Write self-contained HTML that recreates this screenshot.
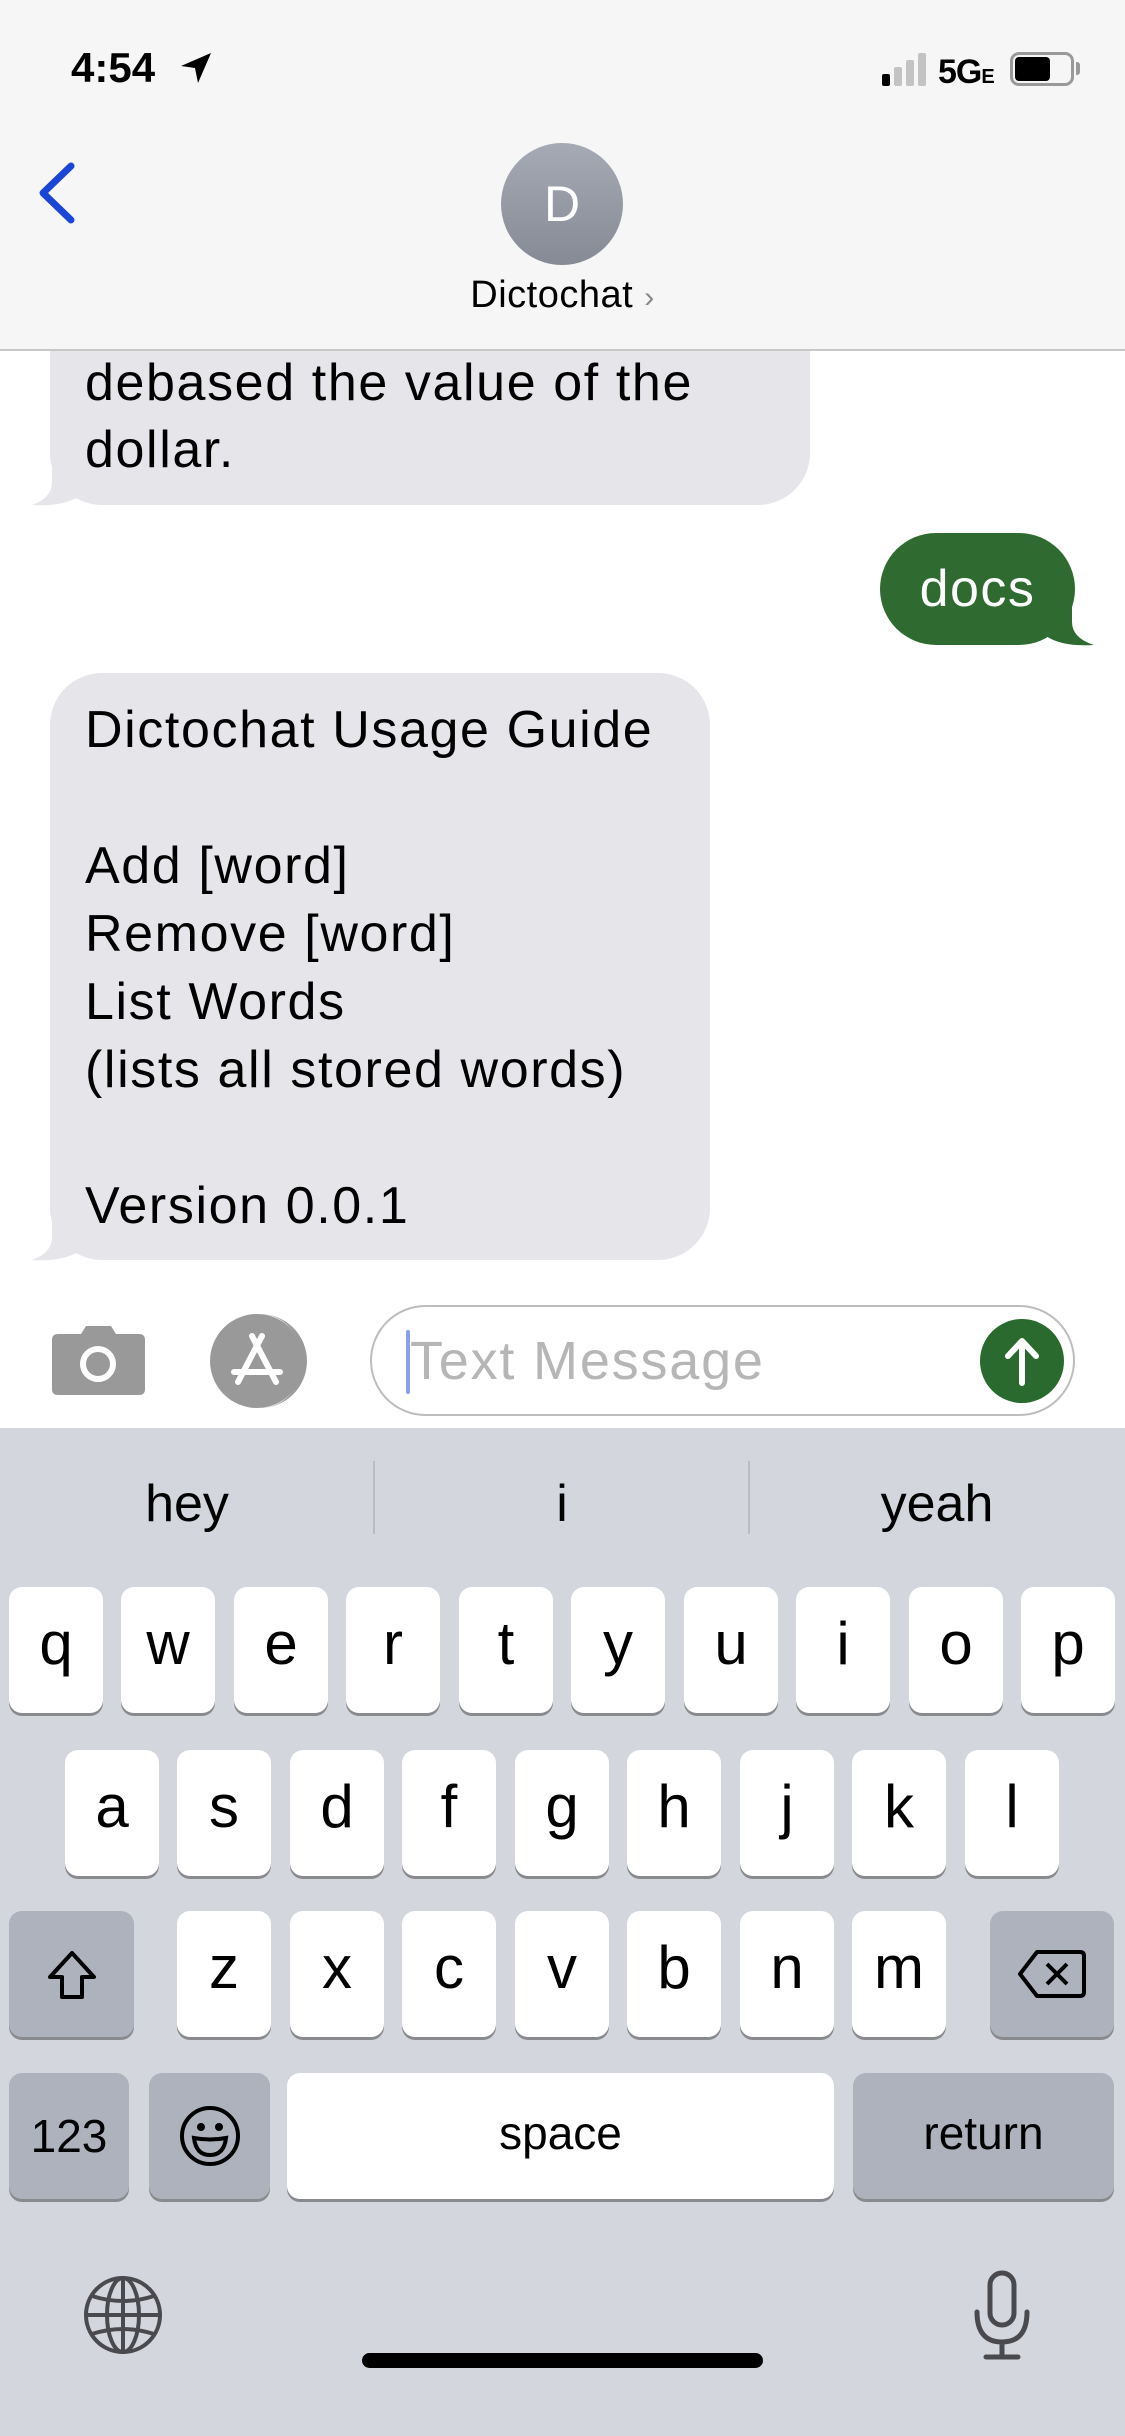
<!DOCTYPE html>
<html><head><meta charset="utf-8"><style>
*{margin:0;padding:0;box-sizing:border-box}
body{width:1125px;height:2436px;position:relative;background:#fff;font-family:"Liberation Sans",sans-serif;overflow:hidden}
.a{position:absolute}
.hdr{left:0;top:0;width:1125px;height:351px;background:#f6f6f6;border-bottom:2px solid #c8c8c8}
.bub{background:#e5e5ea;border-radius:52px;color:#000;font-size:52px;line-height:68px;letter-spacing:1.6px}
.kb{left:0;top:1428px;width:1125px;height:1008px;background:#d3d6dc}
.k{position:absolute;background:#fff;border-radius:13px;box-shadow:0 3px 0 #898a8d;font-size:60px;text-align:center;color:#000;height:126px;width:94px;line-height:114px}
.s{background:#adb2bc}
.sug{font-size:52px;top:1474px;text-align:center;width:374px;color:#000}
.div{width:2px;height:73px;top:1461px;background:#b9bcc2}
</style></head><body>
<div class="a bub" style="left:50px;top:300px;width:760px;height:205px;border-radius:0 0 52px 52px"></div>
<svg class="a" style="left:28px;top:460px" width="62" height="46" viewBox="0 0 62 46"><path d="M24 0 V22 Q24 38 4 45 Q34 47 52 36 V0 Z" fill="#e5e5ea"/></svg>
<div class="a" style="left:85px;top:350px;font-size:52px;line-height:67px;letter-spacing:1.6px">debased the value of the<br>dollar.</div>

<div class="a hdr"></div>
<div class="a" style="left:71px;top:44px;font-size:42px;font-weight:bold;">4:54</div>
<svg class="a" style="left:178px;top:50px" width="36" height="36" viewBox="0 0 36 36"><path d="M33 3 L3 16 L17 18 L20 33 Z" fill="#000"/></svg>
<div class="a" style="left:882px;top:74px;width:8px;height:12px;background:#000;border-radius:2px"></div>
<div class="a" style="left:894px;top:67px;width:8px;height:19px;background:#c3c3c3;border-radius:2px"></div>
<div class="a" style="left:906px;top:60px;width:8px;height:26px;background:#c3c3c3;border-radius:2px"></div>
<div class="a" style="left:918px;top:53px;width:8px;height:33px;background:#c3c3c3;border-radius:2px"></div>
<div class="a" style="left:938px;top:53px;font-size:34px;font-weight:bold;letter-spacing:-1px">5G<span style="font-size:20px">E</span></div>
<div class="a" style="left:1010px;top:52px;width:64px;height:34px;border:3px solid #999;border-radius:9px"></div>
<div class="a" style="left:1015px;top:57px;width:35px;height:24px;background:#000;border-radius:4px"></div>
<div class="a" style="left:1076px;top:62px;width:4px;height:13px;background:#999;border-radius:0 3px 3px 0"></div>
<svg class="a" style="left:34px;top:158px" width="50" height="70" viewBox="0 0 50 70"><path d="M37 8 L9 35 L37 62" fill="none" stroke="#1a45d6" stroke-width="7" stroke-linecap="round" stroke-linejoin="round"/></svg>
<div class="a" style="left:501px;top:143px;width:122px;height:122px;border-radius:50%;background:linear-gradient(#a6aab4,#868a95);color:#fff;font-size:50px;text-align:center;line-height:122px">D</div>
<div class="a" style="left:0;top:274px;width:1125px;text-align:center;font-size:38px;letter-spacing:0.5px">Dictochat <span style="color:#888;font-size:30px">›</span></div>

<svg class="a" style="left:1040px;top:600px" width="56" height="46" viewBox="0 0 56 46"><path d="M32 0 V22 Q32 38 54 45 Q22 47 6 36 V0 Z" fill="#2f6b31"/></svg>
<div class="a" style="left:880px;top:533px;width:195px;height:112px;background:#2f6b31;border-radius:56px;color:#fff;font-size:52px;letter-spacing:1.5px;text-align:center;line-height:112px">docs</div>

<svg class="a" style="left:28px;top:1215px" width="62" height="46" viewBox="0 0 62 46"><path d="M24 0 V22 Q24 38 4 45 Q34 47 52 36 V0 Z" fill="#e5e5ea"/></svg>
<div class="a bub" style="left:50px;top:673px;width:660px;height:587px;padding:23px 0 0 35px;">Dictochat Usage Guide<br><br>Add [word]<br>Remove [word]<br>List Words<br>(lists all stored words)<br><br>Version 0.0.1</div>

<svg class="a" style="left:51px;top:1326px" width="95" height="70" viewBox="0 0 95 70"><path d="M30 8 L35 0 H60 L65 8 H88 Q94 8 94 14 V63 Q94 69 88 69 H7 Q1 69 1 63 V14 Q1 8 7 8 Z" fill="#999"/><circle cx="47" cy="38" r="15" fill="none" stroke="#fff" stroke-width="6"/></svg>
<div class="a" style="left:213px;top:1314px;width:94px;height:94px;border-radius:50%;border-right:4px solid #999"></div>
<svg class="a" style="left:210px;top:1314px" width="94" height="94" viewBox="0 0 94 94"><circle cx="47" cy="47" r="47" fill="#999"/><path d="M52 22 L28 68 M42 22 L66 68 M24 58 H70" stroke="#fff" stroke-width="6" stroke-linecap="round"/></svg>
<div class="a" style="left:370px;top:1305px;width:705px;height:111px;border:2px solid #bdbdbd;border-radius:56px"></div>
<div class="a" style="left:406px;top:1330px;width:4px;height:64px;background:#8aa0ef;border-radius:2px"></div>
<div class="a" style="left:410px;top:1330px;font-size:54px;letter-spacing:1.8px;color:#b6b6b6">Text Message</div>
<div class="a" style="left:980px;top:1319px;width:84px;height:84px;border-radius:50%;background:#2a6a2e"></div>
<svg class="a" style="left:980px;top:1319px" width="84" height="84" viewBox="0 0 84 84"><path d="M42 64 V22 M28 37 L42 22 L56 37" fill="none" stroke="#fff" stroke-width="6" stroke-linecap="round" stroke-linejoin="round"/></svg>

<div class="a kb"></div>
<div class="a sug" style="left:0">hey</div>
<div class="a sug" style="left:375px">i</div>
<div class="a sug" style="left:750px">yeah</div>
<div class="a div" style="left:373px"></div>
<div class="a div" style="left:748px"></div>

<div class="k" style="left:9px;top:1587px">q</div>
<div class="k" style="left:121px;top:1587px">w</div>
<div class="k" style="left:234px;top:1587px">e</div>
<div class="k" style="left:346px;top:1587px">r</div>
<div class="k" style="left:459px;top:1587px">t</div>
<div class="k" style="left:571px;top:1587px">y</div>
<div class="k" style="left:684px;top:1587px">u</div>
<div class="k" style="left:796px;top:1587px">i</div>
<div class="k" style="left:909px;top:1587px">o</div>
<div class="k" style="left:1021px;top:1587px">p</div>

<div class="k" style="left:65px;top:1750px">a</div>
<div class="k" style="left:177px;top:1750px">s</div>
<div class="k" style="left:290px;top:1750px">d</div>
<div class="k" style="left:402px;top:1750px">f</div>
<div class="k" style="left:515px;top:1750px">g</div>
<div class="k" style="left:627px;top:1750px">h</div>
<div class="k" style="left:740px;top:1750px">j</div>
<div class="k" style="left:852px;top:1750px">k</div>
<div class="k" style="left:965px;top:1750px">l</div>

<div class="k s" style="left:9px;top:1911px;width:125px"><svg width="60" height="60" viewBox="0 0 60 60" style="margin-top:34px"><path d="M30 8 L52 32 H40 V52 H20 V32 H8 Z" fill="none" stroke="#000" stroke-width="4" stroke-linejoin="round"/></svg></div>
<div class="k" style="left:177px;top:1911px">z</div>
<div class="k" style="left:290px;top:1911px">x</div>
<div class="k" style="left:402px;top:1911px">c</div>
<div class="k" style="left:515px;top:1911px">v</div>
<div class="k" style="left:627px;top:1911px">b</div>
<div class="k" style="left:740px;top:1911px">n</div>
<div class="k" style="left:852px;top:1911px">m</div>
<div class="k s" style="left:990px;top:1911px;width:124px"><svg width="70" height="50" viewBox="0 0 70 50" style="margin-top:38px"><path d="M20 3 H63 Q67 3 67 7 V43 Q67 47 63 47 H20 L3 25 Z" fill="none" stroke="#000" stroke-width="4" stroke-linejoin="round"/><path d="M30 15 L50 35 M50 15 L30 35" stroke="#000" stroke-width="4"/></svg></div>

<div class="k s" style="left:9px;top:2073px;width:120px;font-size:46px;line-height:126px">123</div>
<div class="k s" style="left:149px;top:2073px;width:121px"><svg width="62" height="62" viewBox="0 0 62 62" style="margin-top:32px"><circle cx="31" cy="31" r="28" fill="none" stroke="#000" stroke-width="4"/><circle cx="22" cy="22" r="4"/><circle cx="40" cy="22" r="4"/><path d="M15 33 Q31 36 47 33 Q45 50 31 50 Q17 50 15 33 Z" fill="none" stroke="#000" stroke-width="4"/></svg></div>
<div class="k" style="left:287px;top:2073px;width:547px;font-size:46px;line-height:120px">space</div>
<div class="k s" style="left:853px;top:2073px;width:261px;font-size:46px;line-height:120px">return</div>

<svg class="a" style="left:82px;top:2274px" width="82" height="82" viewBox="0 0 82 82"><g fill="none" stroke="#4a4a4e" stroke-width="4"><circle cx="41" cy="41" r="37"/><ellipse cx="41" cy="41" rx="16" ry="37"/><path d="M41 4 V78 M4 41 H78 M10 22 Q41 32 72 22 M10 60 Q41 50 72 60"/></g></svg>
<svg class="a" style="left:972px;top:2270px" width="60" height="92" viewBox="0 0 60 92"><g fill="none" stroke="#4a4a4e" stroke-width="5" stroke-linecap="round"><rect x="18" y="3" width="24" height="52" rx="12"/><path d="M5 42 Q5 72 30 72 Q55 72 55 42 M30 72 V86 M14 87 H46"/></g></svg>
<div class="a" style="left:362px;top:2353px;width:401px;height:15px;background:#000;border-radius:8px"></div>
</body></html>
